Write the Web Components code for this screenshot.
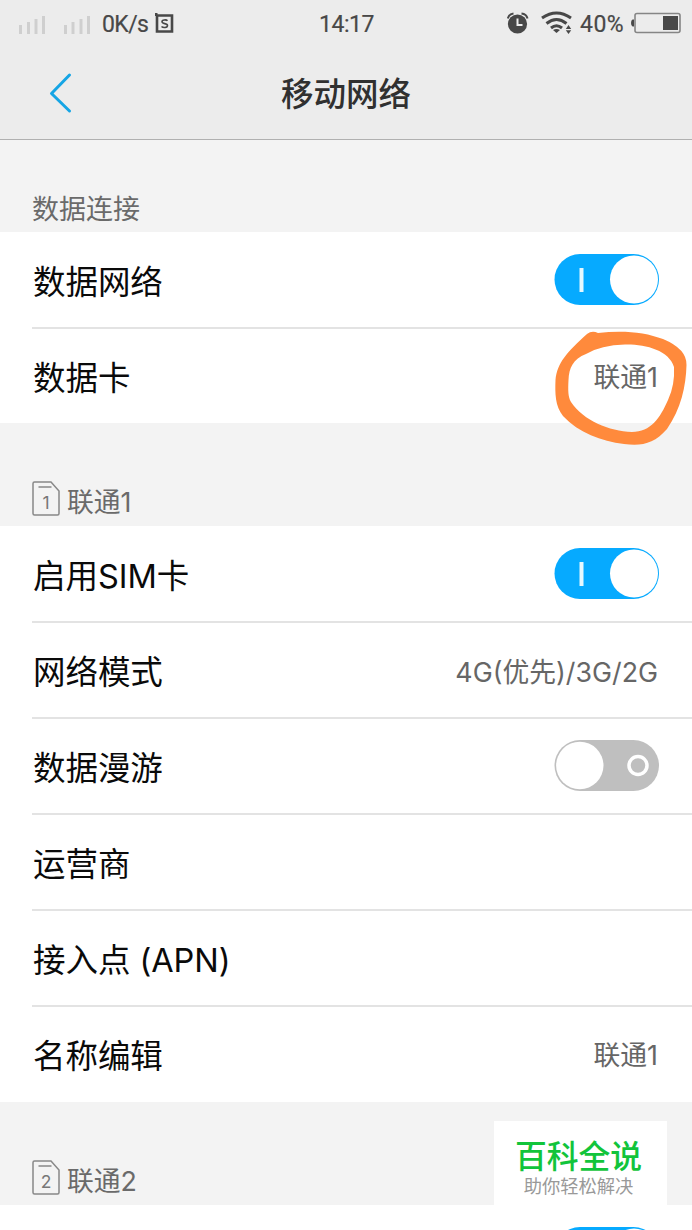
<!DOCTYPE html>
<html lang="zh-CN">
<head>
<meta charset="utf-8">
<title>移动网络</title>
<style>
html,body{margin:0;height:1230px;overflow:hidden;background:#f3f3f3}
body{font-family:Inter,"Noto Sans CJK SC",sans-serif}
</style>
</head>
<body>
<network-page></network-page>
<script>
const define = (name, html, extra) => customElements.define(name, class extends HTMLElement {
  constructor() {
    super();
    const t = document.createElement('template');
    t.innerHTML = html;
    this.attachShadow({mode: 'open'}).append(t.content.cloneNode(true));
    if (extra) extra(this, this.shadowRoot);
  }
});

define('status-bar', `
<style>
:host{display:flex;height:48px;box-sizing:border-box;padding:0 10px 0 18px;justify-content:space-between;align-items:center;color:#484848;font:23px/46px Roboto,sans-serif;-webkit-text-stroke:.2px #484848}
div{display:flex;align-items:center}
svg{display:block;flex:none}
span,.time{padding-top:2px}
.side{width:270px}
.end{justify-content:flex-end}
.time{letter-spacing:-.5px;margin-right:7px}
</style>
<div class="side">
<svg width="84" height="48" viewBox="0 0 84 48" stroke="#cfcfcf" stroke-width="3"><path d="M2.500 25v9M10.500 22v12M18 19v15M25.500 16v18M47.500 25v9M55 22v12M63 19v15M70.500 16v18"/></svg>
<span style="letter-spacing:-.6px">0K/s</span>
<svg style="margin-left:7px" width="20" height="48" viewBox="0 0 20 48" fill="none" stroke="#484848"><path d="M1 13v3" stroke-width="3"/><path d="M2 15.500h15v16H2z" stroke-width="2.600"/><path d="M12.500 20.800c-1-1.200-5.500-1.400-5.500 1s5.500 1.200 5.500 3.700-4.500 2.400-6 1" stroke-width="1.600"/></svg>
</div>
<div class="time">14:17</div>
<div class="side end">
<svg width="22" height="48" viewBox="0 0 22 48"><circle cx="10.500" cy="24" r="9.600" fill="#484848"/><path d="M.8 18.500Q2 14 6.500 13.500M14.500 13.500q5 .500 6 5" fill="none" stroke="#484848" stroke-width="2"/><path d="M10.500 18.500V25h5" fill="none" stroke="#eee" stroke-width="2"/></svg>
<svg style="margin-left:12px" width="32" height="48" viewBox="0 0 32 48" fill="none" stroke="#484848" stroke-width="3"><path d="M1 18Q15.500 8 30 18M5.500 23.500Q15.500 15.500 25.500 23.500M10 28Q15.500 23.500 21 28"/><path d="M12 30Q15.500 27.800 19 30L15.500 33z" fill="#484848" stroke="none"/><path d="M27.500 25l2.700 4h-5.400zM27.500 34l2.700-3.800h-5.400z" fill="#484848" stroke="none"/></svg>
<span style="margin-left:7px;letter-spacing:.4px">40%</span>
<svg style="margin-left:7px" width="51" height="48" viewBox="0 0 51 48"><path d="M3 19.500H1.500Q0 20 0 23t1.500 3.500H3z" fill="#484848"/><rect x="4" y="13.500" width="45" height="19" rx="2" fill="none" stroke="#858585" stroke-width="1.600"/><path d="M32 16h15v14H32z" fill="#484848"/></svg>
</div>`);

define('title-bar', `
<style>
:host{display:grid;grid-template-columns:120px 1fr 120px;height:91px;align-items:center;color:#303030;font-size:32.500px;font-weight:500;line-height:48px}
svg{display:block;margin-left:48px}
h1{font:inherit;margin:0;text-align:center;padding-top:3px}
</style>
<svg width="26" height="91" viewBox="0 0 26 91" fill="none" stroke="#15a5e5" stroke-width="3" stroke-linecap="round" stroke-linejoin="round"><path d="M21.500 27L3.500 45.500 21.500 63"/></svg>
<h1><slot></slot></h1>`);

define('section-title', `
<style>
:host{display:flex;height:103px;box-sizing:border-box;padding:59px 32px 0;background:#f3f3f3;color:#6a6a6a;font-size:26.800px;line-height:40px;align-items:flex-start}
:host([first]){height:92px;padding-top:50px;font-size:27px}
svg{display:none;margin:-1px 6px 0 0;flex:none}
:host([sim]) svg{display:block}
text{font:17.500px Inter,sans-serif}
</style>
<svg width="29" height="36" viewBox="0 0 29 36" fill="none" stroke="#888" stroke-width="1.500"><path d="M2.500 1H19l8 9v22.500Q27 34 25.500 34h-23Q1 34 1 32.500v-30Q1 1 2.500 1zM6.500 6h13"/><text x="14" y="28" text-anchor="middle" fill="#777" stroke="none"></text></svg>
<slot></slot>`, (h, r) => { r.querySelector('text').textContent = h.getAttribute('sim') || ''; });

define('setting-row', `
<style>
:host{display:flex;height:96px;box-sizing:border-box;margin-left:32px;padding:0 33px 0 1px;border-bottom:2px solid #e3e3e3;align-items:center;justify-content:space-between;color:#0a0a0a;font-size:32.500px;line-height:48px}
:host([last]){border-color:transparent;height:95px}
.label{padding-top:6px;letter-spacing:-.05px}
.value{position:relative;display:block;color:#666;font-size:26.800px;line-height:40px}
::slotted(span){display:block;padding-top:3px;margin-right:1px}
</style>
<span class="label"><slot></slot></span><span class="value"><slot name="value"></slot></span>`);

define('toggle-switch', `
<style>
:host{display:block;width:105px;height:51px;margin-top:-2px}
svg{display:block}
.off{display:none}
:host([off]) .off{display:block}
:host([off]) .on{display:none}
</style>
<svg class="on" width="105" height="51" viewBox="0 0 105 51"><rect x=".5" width="104.500" height="51" rx="25.500" fill="#06aaff"/><circle cx="80" cy="25.500" r="24" fill="#fff"/><path d="M27.500 14v24" stroke="#e6f8ff" stroke-width="4"/></svg>
<svg class="off" width="105" height="51" viewBox="0 0 105 51"><rect x=".5" width="104.500" height="51" rx="25.500" fill="#bfbfbf"/><circle cx="25.800" cy="25.500" r="23.700" fill="#fff"/><circle cx="84" cy="25.500" r="9" fill="none" stroke="#fff" stroke-width="3.500"/></svg>`);

define('ink-circle', `
<style>
:host{position:absolute;display:block;right:-29px;top:-26px;width:134px;height:118px;pointer-events:none}
svg{display:block}
</style>
<svg width="134" height="118" viewBox="554 328 134 118"><path fill="#ff8a3c" fill-rule="evenodd" d="M555.500 380C557 363 567 352 587 334Q592 330 598 333C622 330 645 332 663 339Q687 349 686.500 365C686 386 681 409 667 429C654 444 642 446 624 444C601 441 579 433 563 416C555 406 555 393 555.500 380ZM568.500 380C568 390 568 397 571 402C584 421 609 431 632 432C651 432 660 418 668 400Q675 385 674 367C669 350 645 344 625 344.500Q601 345 586 354C573 359 569 368 568.500 380Z"/></svg>`);

define('source-badge', `
<style>
:host{position:absolute;left:494px;top:1121px;width:173px;height:84px;box-sizing:border-box;background:#fff;text-align:center;padding-top:15px}
b{display:block;color:#12c43b;font-size:31.800px;font-weight:500;line-height:42px;margin-left:-4px}
span{display:block;color:#999;font-size:18.300px;line-height:24px;margin-left:-4px;margin-top:-4px}
</style>
<b>百科全说</b><span>助你轻松解决</span>`);

define('network-page', `
<style>
:host{display:block;position:relative;width:692px;height:1230px;overflow:hidden}
header{height:140px;box-sizing:border-box;background:#ececec;border-bottom:1px solid #b0b0b0}
section{background:#fff;padding-top:1px}
.first{height:190px}
</style>
<header><status-bar></status-bar><title-bar>移动网络</title-bar></header>
<section-title first>数据连接</section-title>
<section class="first">
<setting-row>数据网络<toggle-switch slot="value"></toggle-switch></setting-row>
<setting-row last>数据卡<span slot="value">联通1<ink-circle></ink-circle></span></setting-row>
</section>
<section-title sim="1">联通1</section-title>
<section>
<setting-row>启用SIM卡<toggle-switch slot="value"></toggle-switch></setting-row>
<setting-row>网络模式<span slot="value">4G(优先)/3G/2G</span></setting-row>
<setting-row>数据漫游<toggle-switch off slot="value"></toggle-switch></setting-row>
<setting-row>运营商</setting-row>
<setting-row>接入点 (APN)</setting-row>
<setting-row last>名称编辑<span slot="value">联通1</span></setting-row>
</section>
<section-title sim="2">联通2</section-title>
<section><setting-row><toggle-switch slot="value"></toggle-switch></setting-row></section>
<source-badge></source-badge>`);
</script>
</body>
</html>
